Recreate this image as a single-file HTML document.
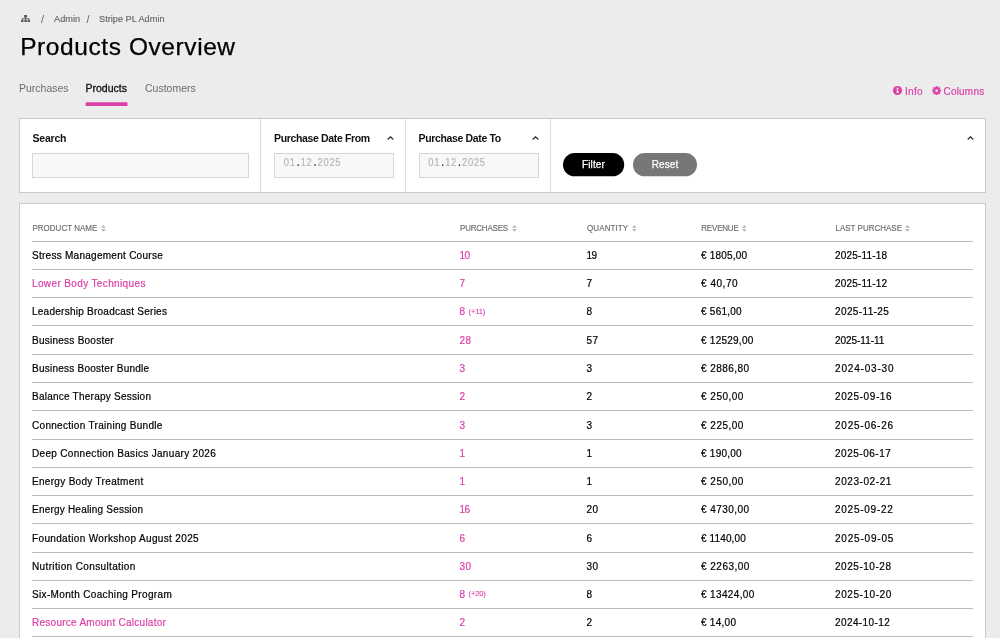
<!DOCTYPE html>
<html>
<head>
<meta charset="utf-8">
<title>Products Overview</title>
<style>
*{box-sizing:border-box;margin:0;padding:0}
html,body{width:1000px;height:638px;overflow:hidden;background:#ececec;font-family:"Liberation Sans",sans-serif;color:#111;}
#root{position:absolute;left:0;top:0;width:1000px;height:638px;overflow:hidden;will-change:transform}
.abs{position:absolute;white-space:nowrap;line-height:1}
.bc{font-size:9.2px;color:#666;top:14.6px;-webkit-text-stroke:.15px #666}
.sl{font-size:11px;top:14px;color:#666}
h1{position:absolute;left:20.2px;top:33.3px;font-size:24.5px;font-weight:normal;letter-spacing:.58px;line-height:28px;color:#000;white-space:nowrap;-webkit-text-stroke:.25px #000}
.tab{font-size:10.5px;color:#6c6c6c;top:83px}
.tab.on{color:#111;-webkit-text-stroke:.3px #111}
.bar{position:absolute;left:85.5px;top:102.5px;width:42px;height:3.6px;background:#dc3fa8;border-radius:.5px}
.pink,.row span.pink{color:#dc3fa8}
.tools{font-size:10px;top:86.6px;color:#dc3fa8;-webkit-text-stroke:.2px #dc3fa8}
.panel{position:absolute;background:#fff;border:1px solid #c9c9c9}
#filter{left:19px;top:118px;width:967px;height:75px}
.vd{position:absolute;top:0;width:1px;height:73px;background:#dcdcdc}
.lbl{font-size:10.5px;font-weight:bold;color:#111;top:14px}
.inp{position:absolute;top:34px;height:25px;border:1px solid #d6d6d6;background:#f8f8f8}
.date{font-size:9.4px;color:#b4b4b4;top:3.4px;left:8.8px;letter-spacing:.75px;transform:scaleY(1.13);transform-origin:0 0;-webkit-text-stroke:.15px currentColor}
.date b{font-weight:bold;color:#333;display:inline-block;width:4.9px;text-align:center;letter-spacing:0;font-size:8.5px}
.chev{position:absolute;top:16.5px;width:7px;height:4px}
.btn{position:absolute;top:34.2px;height:23.1px;border-radius:12px;color:#fff;font-size:10px;letter-spacing:.1px;text-align:center;line-height:23px;-webkit-text-stroke:.25px #fff}
#table{left:19px;top:203px;width:967px;height:460px}
.th{font-size:8px;color:#6e6e6e;-webkit-text-stroke:.15px #6e6e6e;top:20.5px;transform:scaleY(1.2);transform-origin:0 100%}
.row{position:absolute;left:12px;width:941px;height:28.23px;border-top:1px solid #bcbcbc}
.row span{position:absolute;white-space:nowrap;font-size:10px;line-height:1;top:9.25px;color:#000;-webkit-text-stroke:.2px currentColor}
.row .sm{font-size:7.5px;top:9.4px;letter-spacing:-.1px;-webkit-text-stroke:.12px currentColor}
.c1{left:0}.c2{left:427.5px}.c3{left:554.5px}.c4{left:669px}.c5{left:803px}
.srt{position:absolute;top:21.2px;width:4.8px;height:6.7px;margin-left:.1px}
</style>
</head>
<body>
<div id="root">
<!-- breadcrumb -->
<svg class="abs" style="left:20.9px;top:14.5px" width="9.2" height="7.7" viewBox="0 0 9.2 7.7"><path fill="#5c5c5c" d="M3.05 0h3.1v2.5h-3.1zM4.15 2.5h.9v2.5h-.9zM.8 3.3h7.6v.9H.8zM.8 3.3h.9V5h-.9zM7.5 3.3h.9V5h-.9zM0 5h2.6v2.7H0zM3.3 5h2.6v2.7H3.3zM6.6 5h2.6v2.7H6.6z"/></svg>
<div class="abs sl" style="left:41px">/</div>
<div class="abs bc" style="left:54px">Admin</div>
<div class="abs sl" style="left:86.5px">/</div>
<div class="abs bc" style="left:99px">Stripe PL Admin</div>
<h1>Products Overview</h1>
<!-- tabs -->
<div class="abs tab" style="left:19px">Purchases</div>
<div class="abs tab on" style="left:85.5px">Products</div>
<div class="abs tab" style="left:145px">Customers</div>
<svg class="abs" style="left:80px;top:100px" width="60" height="10"><rect x="5.6" y="2.3" width="41.9" height="3.8" rx=".6" fill="#dc3fa8"/></svg>
<!-- tools -->
<svg class="abs" style="left:893.1px;top:86px;overflow:visible" width="9" height="9" viewBox="0 0 9 9"><circle cx="4.5" cy="4.5" r="4.55" fill="#dc3fa8"/><rect x="3.9" y="3.6" width="1.4" height="3.2" fill="#ececec"/><rect x="3.4" y="3.6" width="1.2" height=".8" fill="#ececec"/><rect x="3.3" y="6.2" width="2.5" height=".8" fill="#ececec"/><circle cx="4.5" cy="2.3" r=".85" fill="#ececec"/></svg>
<div class="abs tools" style="left:905px;letter-spacing:.3px">Info</div>
<svg class="abs" style="left:931.9px;top:85.8px" width="9.3" height="9.3" viewBox="0 0 10 10"><path fill="#dc3fa8" fill-rule="evenodd" stroke="#dc3fa8" stroke-width=".5" stroke-linejoin="round" d="M4.11 1.41L4.22 0.31L5.78 0.31L5.89 1.41L6.91 1.83L7.76 1.14L8.86 2.24L8.17 3.09L8.59 4.11L9.69 4.22L9.69 5.78L8.59 5.89L8.17 6.91L8.86 7.76L7.76 8.86L6.91 8.17L5.89 8.59L5.78 9.69L4.22 9.69L4.11 8.59L3.09 8.17L2.24 8.86L1.14 7.76L1.83 6.91L1.41 5.89L0.31 5.78L0.31 4.22L1.41 4.11L1.83 3.09L1.14 2.24L2.24 1.14L3.09 1.83ZM3.35 5a1.65 1.65 0 1 0 3.3 0a1.65 1.65 0 1 0 -3.3 0Z"/></svg>
<div class="abs tools" style="left:943.5px;letter-spacing:.2px">Columns</div>

<!-- filter panel -->
<div class="panel" id="filter">
  <div class="vd" style="left:240px"></div>
  <div class="vd" style="left:385px"></div>
  <div class="vd" style="left:530px"></div>
  <div class="abs lbl" style="left:12.5px;letter-spacing:-.2px">Search</div>
  <div class="inp" style="left:12px;width:217px"></div>
  <div class="abs lbl" style="left:254px;letter-spacing:-.35px">Purchase Date From</div>
  <svg class="chev" style="left:367px" viewBox="0 0 7 4"><path d="M.7 3.5 3.5.8l2.8 2.7" fill="none" stroke="#333" stroke-width="1.3"/></svg>
  <div class="inp" style="left:254px;width:120px"><div class="abs date">01<b>.</b>12<b>.</b>2025</div></div>
  <div class="abs lbl" style="left:398.5px;letter-spacing:-.35px">Purchase Date To</div>
  <svg class="chev" style="left:512px" viewBox="0 0 7 4"><path d="M.7 3.5 3.5.8l2.8 2.7" fill="none" stroke="#333" stroke-width="1.3"/></svg>
  <div class="inp" style="left:398.5px;width:120px"><div class="abs date">01<b>.</b>12<b>.</b>2025</div></div>
  <svg class="abs" style="left:540px;top:30px" width="150" height="32"><rect x="3" y="4.1" width="61.2" height="23.2" rx="11.6" fill="#000"/><rect x="73" y="4.1" width="64" height="23.2" rx="11.6" fill="#777"/></svg>
  <div class="btn" style="left:543px;width:61px">Filter</div>
  <div class="btn" style="left:613px;width:64px">Reset</div>
  <svg class="chev" style="left:946.5px" viewBox="0 0 7 4"><path d="M.7 3.5 3.5.8l2.8 2.7" fill="none" stroke="#333" stroke-width="1.3"/></svg>
</div>

<!-- table panel -->
<div class="panel" id="table">
  <div class="abs th" style="left:12.5px">PRODUCT NAME</div>
  <div class="abs th" style="left:440px;letter-spacing:-.2px">PURCHASES</div>
  <div class="abs th" style="left:567px;letter-spacing:.1px">QUANTITY</div>
  <div class="abs th" style="left:681.3px;letter-spacing:-.2px">REVENUE</div>
  <div class="abs th" style="left:815.5px">LAST PURCHASE</div>
  <svg class="srt" style="left:81px" viewBox="0 0 5 7" preserveAspectRatio="none"><path fill="#b8b8b8" d="M2.5 0 5 2.9H0zM0 4.1h5L2.5 7z"/></svg>
  <svg class="srt" style="left:491.8px" viewBox="0 0 5 7" preserveAspectRatio="none"><path fill="#b8b8b8" d="M2.5 0 5 2.9H0zM0 4.1h5L2.5 7z"/></svg>
  <svg class="srt" style="left:611.5px" viewBox="0 0 5 7" preserveAspectRatio="none"><path fill="#b8b8b8" d="M2.5 0 5 2.9H0zM0 4.1h5L2.5 7z"/></svg>
  <svg class="srt" style="left:721.5px" viewBox="0 0 5 7" preserveAspectRatio="none"><path fill="#b8b8b8" d="M2.5 0 5 2.9H0zM0 4.1h5L2.5 7z"/></svg>
  <svg class="srt" style="left:885px" viewBox="0 0 5 7" preserveAspectRatio="none"><path fill="#b8b8b8" d="M2.5 0 5 2.9H0zM0 4.1h5L2.5 7z"/></svg>
<!--ROWS-->
  <div class="row" style="top:36.7px"><span class="c1" style="letter-spacing:0.27px">Stress Management Course</span><span class="c2 pink" style="letter-spacing:-.6px">10</span><span class="c3" style="letter-spacing:-.6px">19</span><span class="c4" style="letter-spacing:0.212px">€ 1805,00</span><span class="c5" style="letter-spacing:0.178px">2025-11-18</span></div>
  <div class="row" style="top:64.96px"><span class="c1 pink" style="letter-spacing:0.37px">Lower Body Techniques</span><span class="c2 pink">7</span><span class="c3">7</span><span class="c4" style="letter-spacing:0.533px">€ 40,70</span><span class="c5" style="letter-spacing:0.178px">2025-11-12</span></div>
  <div class="row" style="top:93.22px"><span class="c1" style="letter-spacing:0.25px">Leadership Broadcast Series</span><span class="c2 pink">8</span><span class="sm pink" style="left:436.5px">(+11)</span><span class="c3">8</span><span class="c4" style="letter-spacing:0.243px">€ 561,00</span><span class="c5" style="letter-spacing:0.378px">2025-11-25</span></div>
  <div class="row" style="top:121.48px"><span class="c1" style="letter-spacing:0.253px">Business Booster</span><span class="c2 pink" style="letter-spacing:.5px">28</span><span class="c3" style="letter-spacing:.5px">57</span><span class="c4" style="letter-spacing:0.244px">€ 12529,00</span><span class="c5" style="letter-spacing:-0.044px">2025-11-11</span></div>
  <div class="row" style="top:149.74px"><span class="c1" style="letter-spacing:0.245px">Business Booster Bundle</span><span class="c2 pink">3</span><span class="c3">3</span><span class="c4" style="letter-spacing:0.438px">€ 2886,80</span><span class="c5" style="letter-spacing:0.822px">2024-03-30</span></div>
  <div class="row" style="top:178px"><span class="c1" style="letter-spacing:0.236px">Balance Therapy Session</span><span class="c2 pink">2</span><span class="c3">2</span><span class="c4" style="letter-spacing:0.5px">€ 250,00</span><span class="c5" style="letter-spacing:0.6px">2025-09-16</span></div>
  <div class="row" style="top:206.26px"><span class="c1" style="letter-spacing:0.3px">Connection Training Bundle</span><span class="c2 pink">3</span><span class="c3">3</span><span class="c4" style="letter-spacing:0.5px">€ 225,00</span><span class="c5" style="letter-spacing:0.767px">2025-06-26</span></div>
  <div class="row" style="top:234.52px"><span class="c1" style="letter-spacing:0.321px">Deep Connection Basics January 2026</span><span class="c2 pink">1</span><span class="c3">1</span><span class="c4" style="letter-spacing:0.243px">€ 190,00</span><span class="c5" style="letter-spacing:0.522px">2025-06-17</span></div>
  <div class="row" style="top:262.78px"><span class="c1" style="letter-spacing:0.31px">Energy Body Treatment</span><span class="c2 pink">1</span><span class="c3">1</span><span class="c4" style="letter-spacing:0.5px">€ 250,00</span><span class="c5" style="letter-spacing:0.578px">2023-02-21</span></div>
  <div class="row" style="top:291.04px"><span class="c1" style="letter-spacing:0.21px">Energy Healing Session</span><span class="c2 pink" style="letter-spacing:-.6px">16</span><span class="c3" style="letter-spacing:.5px">20</span><span class="c4" style="letter-spacing:0.462px">€ 4730,00</span><span class="c5" style="letter-spacing:0.744px">2025-09-22</span></div>
  <div class="row" style="top:319.3px"><span class="c1" style="letter-spacing:0.353px">Foundation Workshop August 2025</span><span class="c2 pink">6</span><span class="c3">6</span><span class="c4" style="letter-spacing:0.125px">€ 1140,00</span><span class="c5" style="letter-spacing:0.8px">2025-09-05</span></div>
  <div class="row" style="top:347.56px"><span class="c1" style="letter-spacing:0.367px">Nutrition Consultation</span><span class="c2 pink" style="letter-spacing:.5px">30</span><span class="c3" style="letter-spacing:.5px">30</span><span class="c4" style="letter-spacing:0.488px">€ 2263,00</span><span class="c5" style="letter-spacing:0.533px">2025-10-28</span></div>
  <div class="row" style="top:375.82px"><span class="c1" style="letter-spacing:0.344px">Six-Month Coaching Program</span><span class="c2 pink">8</span><span class="sm pink" style="left:436.5px">(+20)</span><span class="c3">8</span><span class="c4" style="letter-spacing:0.367px">€ 13424,00</span><span class="c5" style="letter-spacing:0.567px">2025-10-20</span></div>
  <div class="row" style="top:404.08px"><span class="c1 pink" style="letter-spacing:0.264px">Resource Amount Calculator</span><span class="c2 pink">2</span><span class="c3">2</span><span class="c4" style="letter-spacing:0.267px">€ 14,00</span><span class="c5" style="letter-spacing:0.4px">2024-10-12</span></div>
  <div class="row" style="top:432.34px"></div>
<!--/ROWS-->
</div>
</div>
</body>
</html>
